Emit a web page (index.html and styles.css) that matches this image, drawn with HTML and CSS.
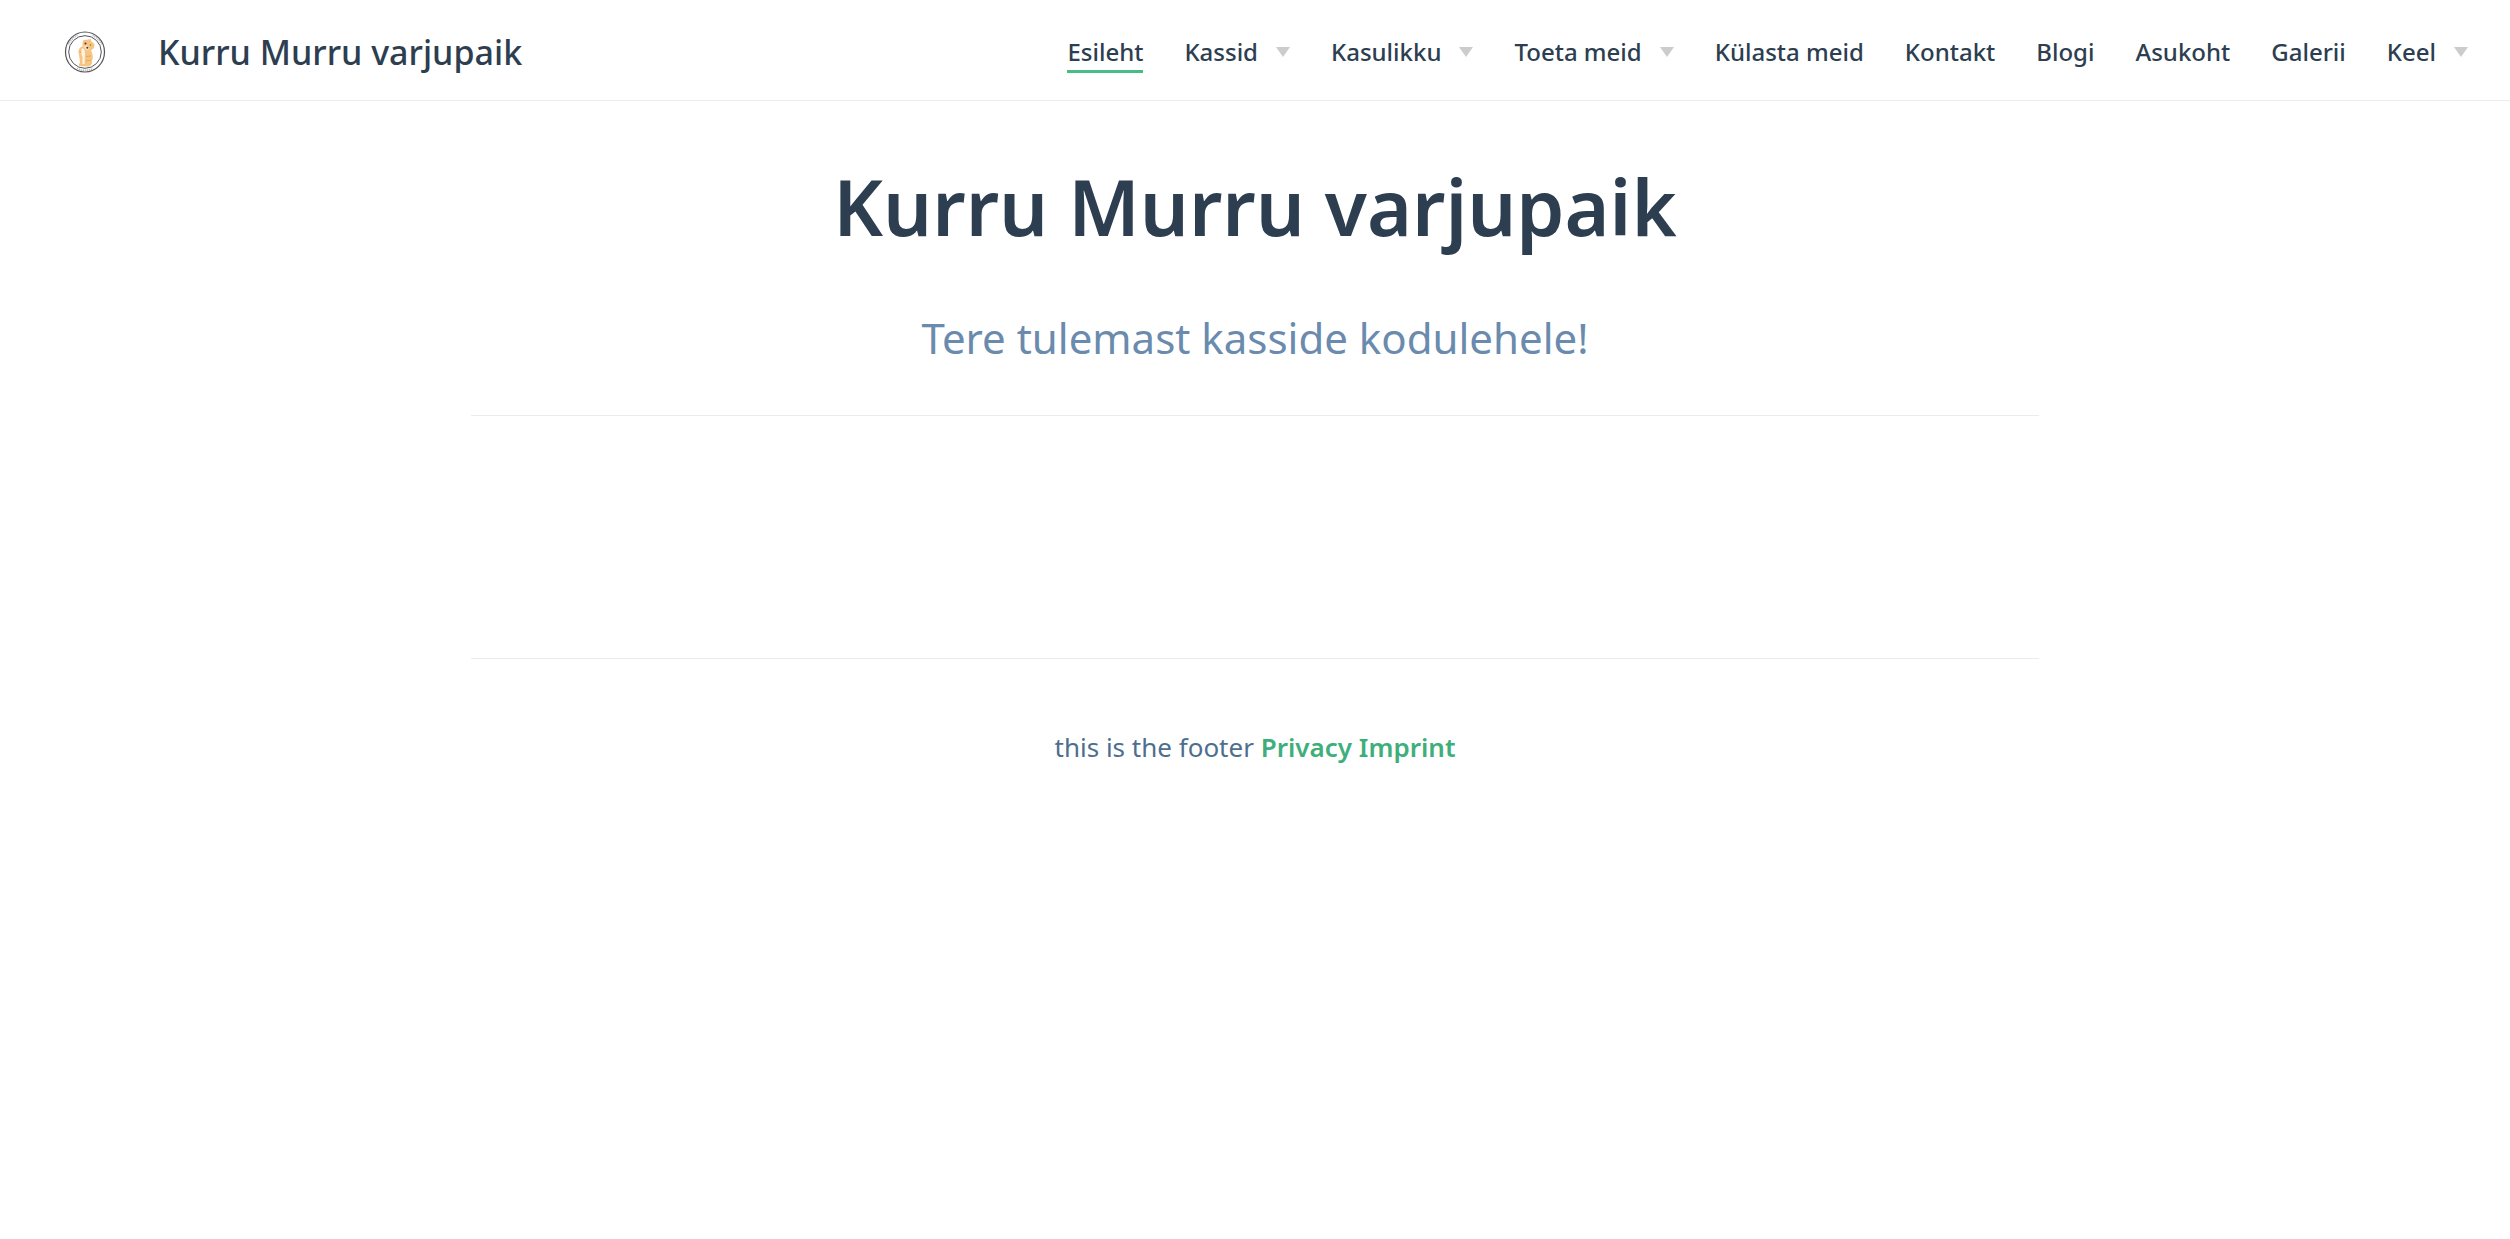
FILE: index.html
```html
<!DOCTYPE html>
<html lang="et">
<head>
<meta charset="utf-8">
<meta name="viewport" content="width=device-width, initial-scale=1">
<title>Kurru Murru varjupaik</title>
<link rel="stylesheet" href="styles.css">
</head>
<body>
<header class="navbar">
  <a class="home-link" href="#">
    <svg class="logo" viewBox="0 0 42 42" aria-hidden="true">
      <ellipse cx="21" cy="21" rx="19.500" ry="20" fill="#fff" stroke="#55555c" stroke-width="1.2"/>
      <circle cx="21" cy="21" r="16.300" fill="none" stroke="#55555c" stroke-width="1"/>
      <g fill="none" stroke="#bbb" stroke-width="1.6" stroke-dasharray="1.2 .8">
        <path d="M4.500 13.500A18.200 18.200 0 0 1 13.500 4.500"/>
        <path d="M28.500 4.500A18.200 18.200 0 0 1 37.500 13.500"/>
        <path d="M13 37.400A18.200 18.200 0 0 0 29 37.400"/>
      </g>
      <path d="M18.500 11.500L19.500 9L23 8.700L26.500 8L27.500 10.500L30.500 13L30 17L27 19.500C29 23 29.500 27 28 30C28.500 34 26 35.500 23 35.500L16 35C14 34.500 14.500 33 16 32L15.500 27L14.500 22C14.300 18 16 16 18.500 15.500Z" fill="#f6c583"/>
      <path d="M18 17L20.500 18.500L21 24L20.500 33L18.500 33L18.500 26L17 22Z" fill="#fff3e2"/>
      <path d="M19.500 15.500L23 14L25.500 18L22.500 19.500Z" fill="#fbe1bd"/>
      <path d="M22 25.500L27 25M22 30L27 29M15.500 20.500L17.500 21.500" fill="none" stroke="#e6a55c" stroke-width=".9"/>
      <circle cx="21.500" cy="12.500" r="1" fill="#4b3828"/>
      <circle cx="23.300" cy="16.800" r="1" fill="#4b3828"/>
      <circle cx="26.500" cy="14" r=".7" fill="#8d6238"/>
    </svg>
    <span class="site-name">Kurru Murru varjupaik</span>
  </a>
  <nav class="nav-links">
    <a class="nav-link active" href="#">Esileht</a>
    <button class="nav-link" type="button">Kassid<span class="arrow"></span></button>
    <button class="nav-link" type="button">Kasulikku<span class="arrow"></span></button>
    <button class="nav-link" type="button">Toeta meid<span class="arrow"></span></button>
    <a class="nav-link" href="#">Külasta meid</a>
    <a class="nav-link" href="#">Kontakt</a>
    <a class="nav-link" href="#">Blogi</a>
    <a class="nav-link" href="#">Asukoht</a>
    <a class="nav-link" href="#">Galerii</a>
    <button class="nav-link" type="button">Keel<span class="arrow"></span></button>
  </nav>
</header>
<main class="home">
  <section class="hero">
    <h1 class="hero-title">Kurru Murru varjupaik</h1>
    <p class="hero-text">Tere tulemast kasside kodulehele!</p>
  </section>
  <section class="features"></section>
  <footer class="footer">this is the footer <a class="footer-link" href="#">Privacy</a> <a class="footer-link" href="#">Imprint</a></footer>
</main>
</body>
</html>
```
FILE: styles.css
```css
* {
  box-sizing: border-box;
}

body {
  margin: 0;
  background: #fff;
  color: #2c3e50;
  font-family: "Segoe UI", "Noto Sans", "Open Sans", sans-serif;
}

a {
  color: inherit;
  text-decoration: none;
}

.navbar {
  display: flex;
  align-items: center;
  justify-content: space-between;
  min-height: 101px;
  padding: 3px 42px 0 64px;
  border-bottom: 1px solid #eaecef;
}

.home-link {
  display: flex;
  align-items: center;
  gap: 52px;
}

.logo {
  width: 42px;
  height: 42px;
}

.site-name {
  font-size: 34px;
  font-weight: 500;
  line-height: 60px;
}

.nav-links {
  display: flex;
  align-items: center;
  gap: 41px;
}

.nav-link {
  display: flex;
  align-items: center;
  padding: 3px 0 0;
  border: 0;
  border-bottom: 3px solid transparent;
  background: none;
  color: inherit;
  font: 500 24px/36px "Segoe UI", "Noto Sans", "Open Sans", sans-serif;
  white-space: nowrap;
  cursor: pointer;
}

.nav-link.active {
  border-bottom-color: #46bd87;
}

.arrow {
  margin-left: 18px;
  border-top: 10px solid #ccc;
  border-right: 7px solid transparent;
  border-left: 7px solid transparent;
}

.home {
  max-width: 1680px;
  margin: 0 auto;
  padding: 54px 56px;
}

.hero {
  text-align: center;
}

.hero-title {
  margin: 0;
  font-size: 77px;
  font-weight: 600;
  line-height: 104px;
}

.hero-text {
  margin: 50px 0 48px;
  color: #6a8bad;
  font-size: 42px;
  line-height: 58px;
}

.features {
  min-height: 244px;
  border-top: 1px solid #eaecef;
  border-bottom: 1px solid #eaecef;
}

.footer {
  padding: 64px 0;
  color: #4e6e8e;
  font-size: 26px;
  line-height: 48px;
  text-align: center;
}

.footer-link {
  color: #3eaf7c;
  font-weight: 600;
}
```
